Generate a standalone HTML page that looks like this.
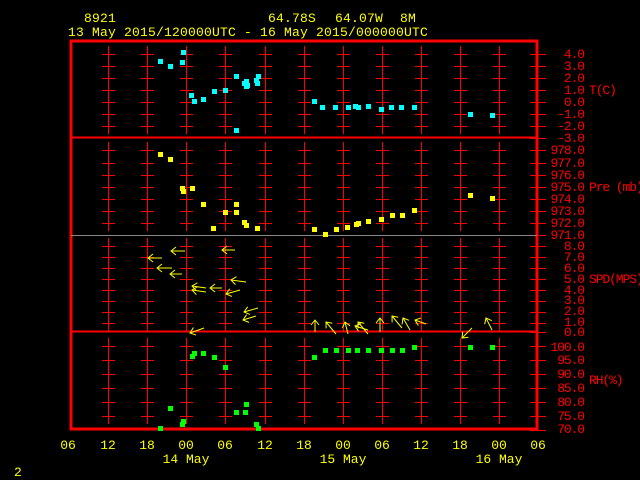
<!DOCTYPE html>
<html><head><meta charset="utf-8"><style>
html,body{margin:0;padding:0;background:#000;width:640px;height:480px;overflow:hidden}
svg{display:block}
text{font-family:"Liberation Mono",monospace;font-size:13px}
.y{fill:#ffff00}.r{fill:#ff0000;font-size:11.5px;letter-spacing:-1.1px}
</style></head><body>
<svg id="s" width="640" height="480" xmlns="http://www.w3.org/2000/svg">
<rect width="640" height="480" fill="#000"/>
<g id="grid" stroke="#ff0000" stroke-width="1"></g>
<rect x="71" y="41" width="466" height="388" fill="none" stroke="#ff0000" stroke-width="3"/>
<line x1="71" y1="137.5" x2="537" y2="137.5" stroke="#ff0000" stroke-width="2"/>
<line x1="71" y1="235.5" x2="537" y2="235.5" stroke="#888" stroke-width="1"/>
<line x1="71" y1="331.5" x2="537" y2="331.5" stroke="#ff0000" stroke-width="2"/>
<g id="pts"></g>
<g id="arr" stroke="#ffff00" stroke-width="1" fill="none"></g>
<g style="letter-spacing:0.2px">
<text class="y" x="84" y="22">8921</text>
<text class="y" x="268" y="22">64.78S</text>
<text class="y" x="335" y="22">64.07W</text>
<text class="y" x="400" y="22">8M</text>
<text class="y" x="68" y="36">13 May 2015/120000UTC - 16 May 2015/000000UTC</text>
</g>
<g class="r" text-anchor="end">
<text x="584" y="58">4.0</text><text x="584" y="70">3.0</text><text x="584" y="82">2.0</text><text x="584" y="94">1.0</text><text x="584" y="106">0.0</text><text x="584" y="118">-1.0</text><text x="584" y="130">-2.0</text><text x="584" y="142">-3.0</text>
<text x="584" y="154">978.0</text><text x="584" y="167">977.0</text><text x="584" y="179">976.0</text><text x="584" y="191">975.0</text><text x="584" y="203">974.0</text><text x="584" y="215">973.0</text><text x="584" y="227">972.0</text><text x="584" y="239">971.0</text>
<text x="584" y="250">8.0</text><text x="584" y="261">7.0</text><text x="584" y="272">6.0</text><text x="584" y="283">5.0</text><text x="584" y="294">4.0</text><text x="584" y="304">3.0</text><text x="584" y="315">2.0</text><text x="584" y="326">1.0</text><text x="584" y="336">0.0</text>
<text x="584" y="351">100.0</text><text x="584" y="364">95.0</text><text x="584" y="378">90.0</text><text x="584" y="392">85.0</text><text x="584" y="406">80.0</text><text x="584" y="420">75.0</text><text x="584" y="433">70.0</text>
</g>
<g class="r"><text x="589" y="94">T(C)</text><text x="589" y="191">Pre (mb)</text><text x="589" y="283">SPD(MPS)</text><text x="589" y="384">RH(%)</text></g>
<g class="y" text-anchor="middle">
<text x="68" y="449">06</text><text x="108" y="449">12</text><text x="147" y="449">18</text><text x="186" y="449">00</text><text x="225" y="449">06</text><text x="265" y="449">12</text><text x="304" y="449">18</text><text x="343" y="449">00</text><text x="382" y="449">06</text><text x="421" y="449">12</text><text x="460" y="449">18</text><text x="499" y="449">00</text><text x="538" y="449">06</text>
<text x="186" y="463">14 May</text><text x="343" y="463">15 May</text><text x="499" y="463">16 May</text>
</g>
<text class="y" x="14" y="476">2</text>
</svg>
<script>
var g=document.getElementById('grid'),h='';
var rows=[54,66,78,90,102,114,126,150,163,175,187,199,211,223,246,257,268,279,290,301,312,323,346,360,374,388,402,416];
var cols=[108,147,186,225,265,304,343,382,421,460,499];
cols.forEach(function(x){rows.forEach(function(y){h+='<line x1="'+(x-6)+'" y1="'+(y+.5)+'" x2="'+(x+7)+'" y2="'+(y+.5)+'"/><line x1="'+(x+.5)+'" y1="'+(y-8)+'" x2="'+(x+.5)+'" y2="'+(y+8)+'"/>';});});
rows.concat([138,235,332,430]).forEach(function(y){h+='<line x1="530" y1="'+(y+.5)+'" x2="546" y2="'+(y+.5)+'"/>';});
g.innerHTML=h;
function P(a,c){var s='';a.forEach(function(p){s+='<rect x="'+(p[0]-2)+'" y="'+(p[1]-2)+'" width="5" height="5" fill="'+c+'"/>';});return s;}
var cy=[[160,61],[170,66],[182,62],[183,52],[191,95],[194,101],[203,99],[214,91],[225,90],[236,130],[236,76],[244,83],[246,81],[246,86],[247,85],[256,80],[258,76],[257,83],[314,101],[322,107],[335,107],[348,107],[355,106],[358,107],[368,106],[381,109],[391,107],[401,107],[414,107],[470,114],[492,115]];
var ye=[[160,154],[170,159],[182,188],[183,191],[192,188],[203,204],[213,228],[225,212],[236,204],[236,212],[244,222],[246,225],[257,228],[314,229],[325,234],[336,229],[347,227],[356,224],[358,223],[368,221],[381,219],[392,215],[402,215],[414,210],[470,195],[492,198]];
var gr=[[160,428],[170,408],[182,424],[183,421],[192,356],[194,353],[203,353],[214,357],[225,367],[236,412],[246,404],[245,412],[256,424],[258,428],[314,357],[325,350],[336,350],[348,350],[357,350],[368,350],[381,350],[392,350],[402,350],[414,347],[470,347],[492,347]];
document.getElementById('pts').innerHTML=P(cy,'#00ffff')+P(ye,'#ffff00')+P(gr,'#00ff00');
var ar=[[148,258,162,258],[157,268,172,268],[171,251,185,251],[170,274,182,274],[192,286,206,288],[192,290,206,292],[210,288,222,288],[222,250,235,250],[226,294,240,290],[231,280,246,282],[244,312,258,308],[243,320,256,316],[190,333,204,328],[315,320,315,332],[326,322,336,334],[345,322,348,334],[355,326,368,330],[358,322,368,334],[380,318,380,332],[392,316,402,328],[403,318,410,330],[415,320,426,324],[462,338,472,328],[486,318,492,330]];
var s='';ar.forEach(function(a){var dx=a[2]-a[0],dy=a[3]-a[1],l=Math.sqrt(dx*dx+dy*dy),ux=dx/l,uy=dy/l;
s+='<line x1="'+a[0]+'" y1="'+a[1]+'" x2="'+a[2]+'" y2="'+a[3]+'"/>';
var hx=a[0],hy=a[1];s+='<polyline points="'+(hx+ux*5-uy*4)+','+(hy+uy*5+ux*4)+' '+hx+','+hy+' '+(hx+ux*5+uy*4)+','+(hy+uy*5-ux*4)+'"/>';});
document.getElementById('arr').innerHTML=s;
</script>
</body></html>
